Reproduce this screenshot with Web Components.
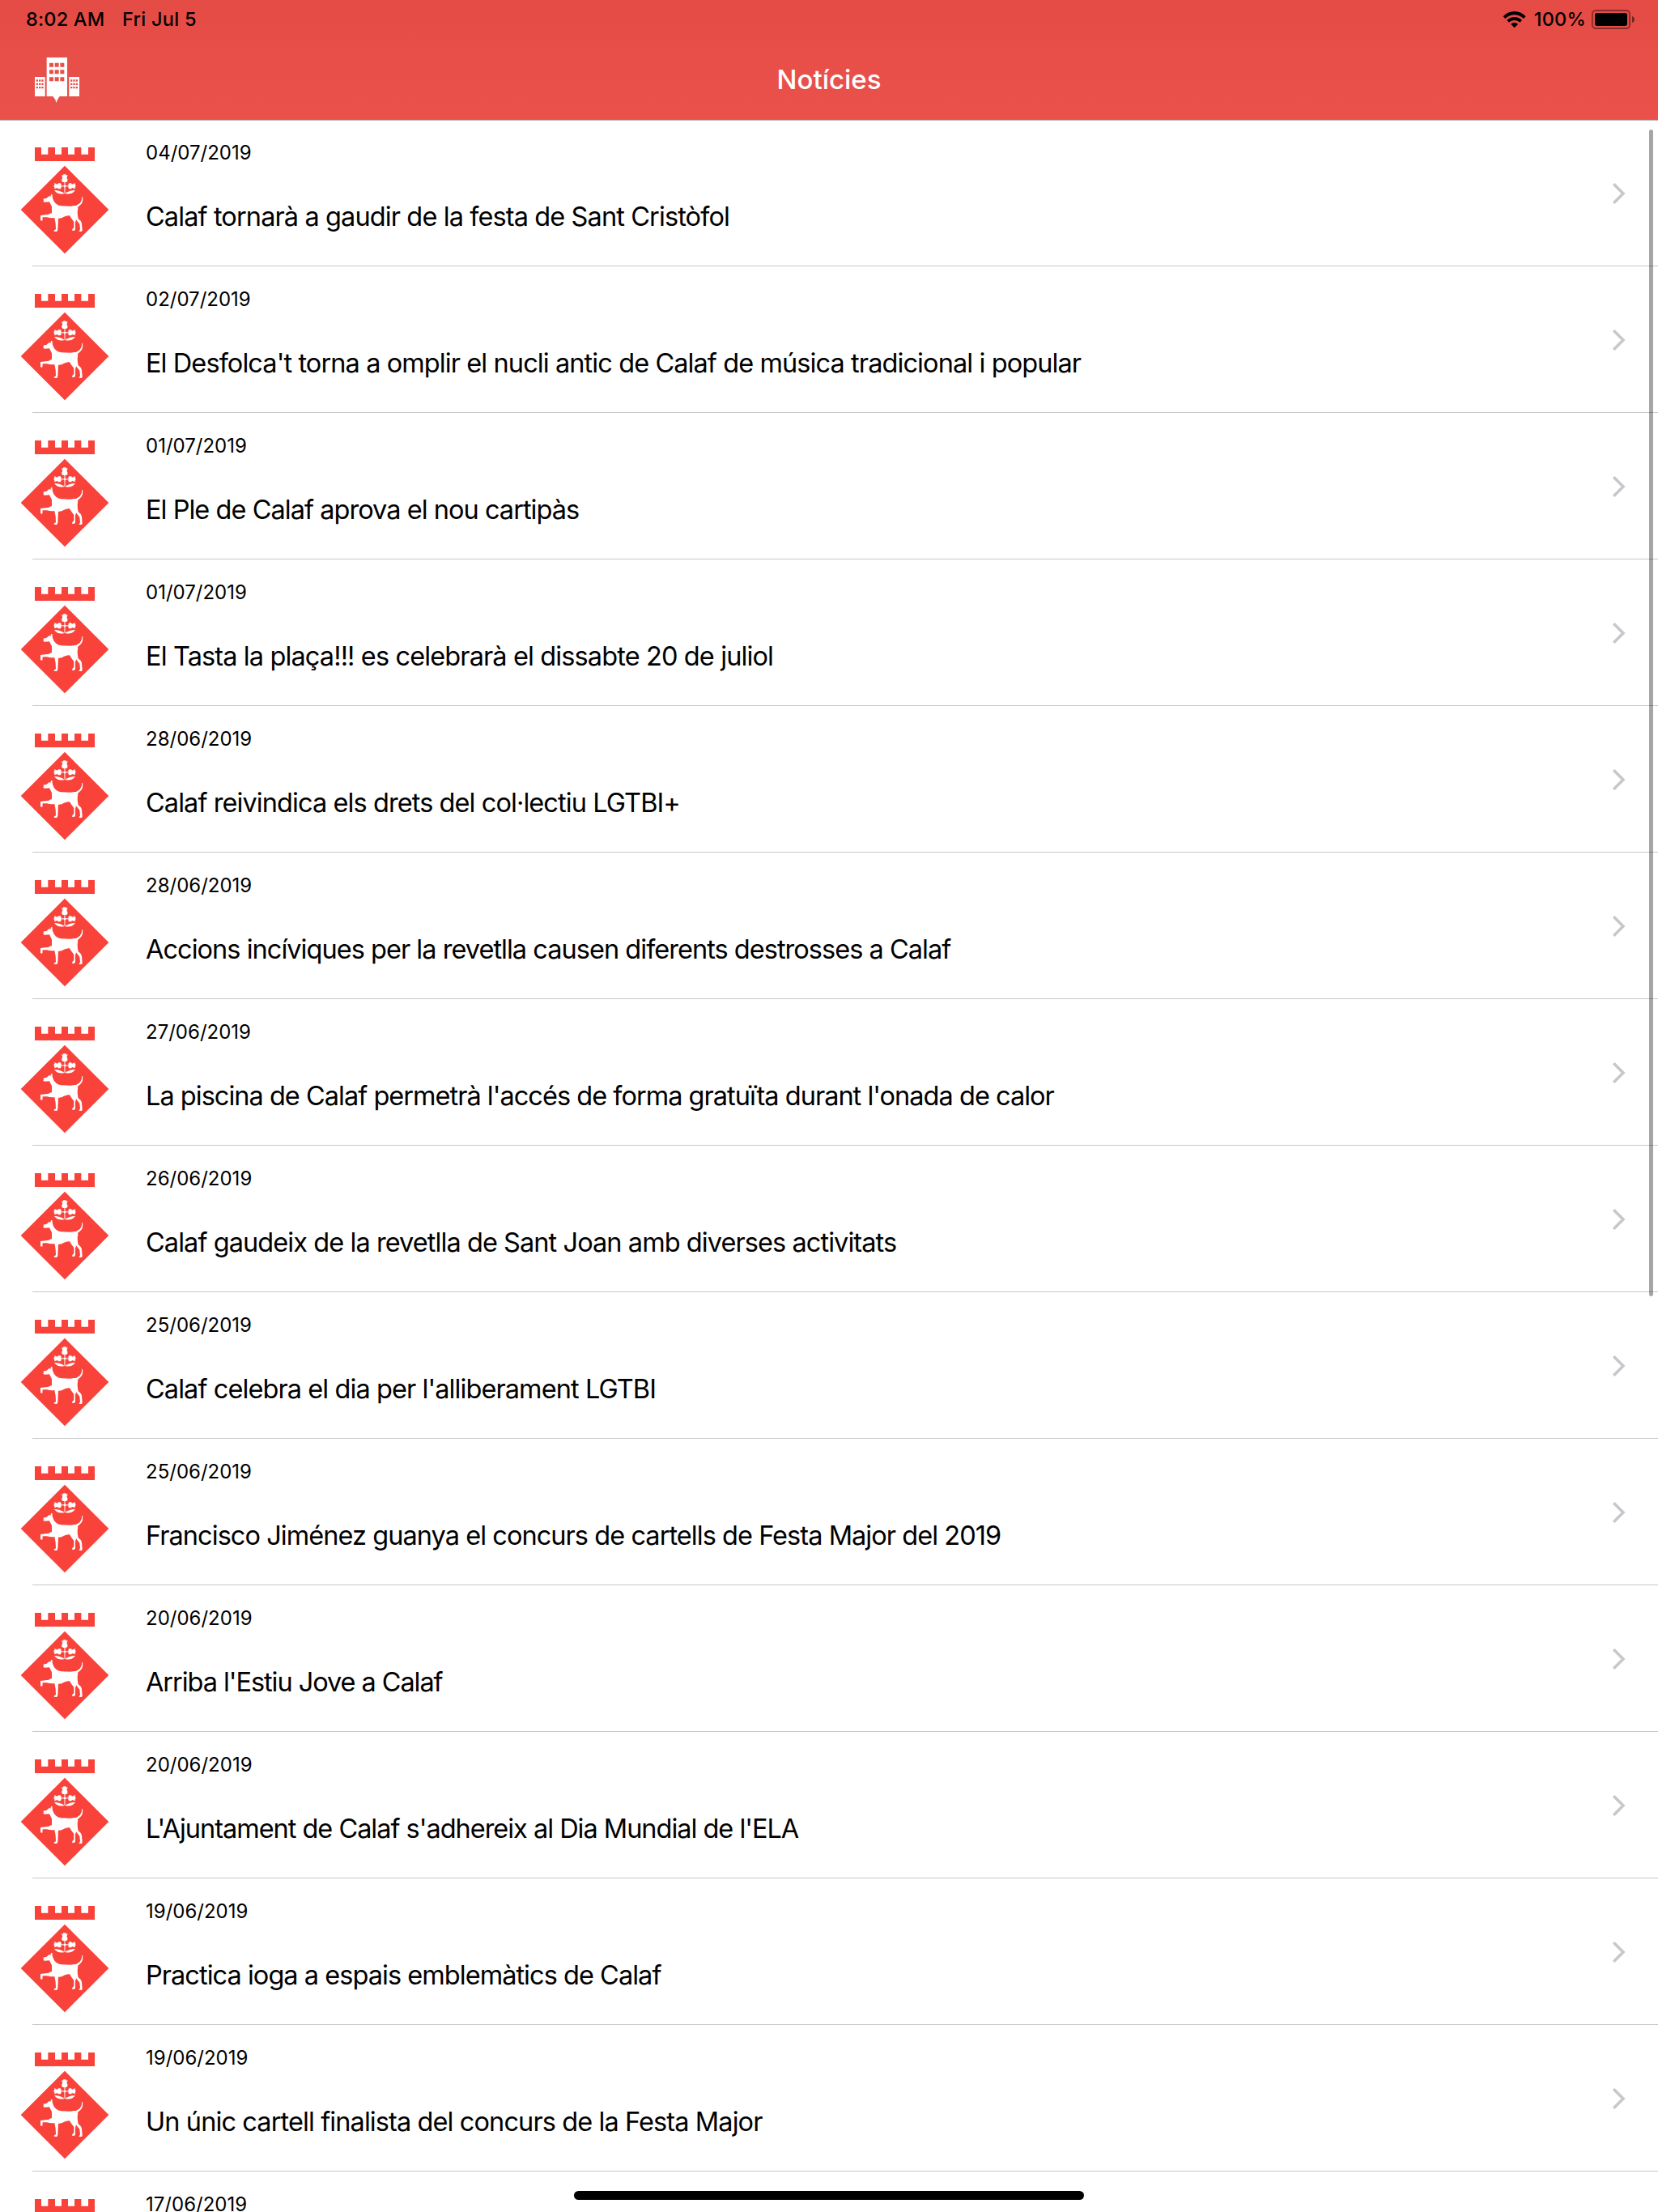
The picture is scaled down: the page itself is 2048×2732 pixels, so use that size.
<!DOCTYPE html>
<html>
<head>
<meta charset="utf-8">
<title>Notícies</title>
<style>
  body{
    margin:0;
    background:#fff;
    color:#000;
    font-family:Inter, "Liberation Sans", sans-serif;
  }
</style>
</head>
<body>
<news-app></news-app>

<script>
const statusBarTemplate = document.createElement('template');

statusBarTemplate.innerHTML = `
 <style>
  :host{
    display:flex;
    align-items:center;
    height:47px;
    box-sizing:border-box;
    padding:0 29px 0 32px;
    font-size:23.5px;
    font-weight:450;
    color:#000;
  }
  .time{
    letter-spacing:0.2px;
    width:119px;
  }
  .date{
    letter-spacing:0.3px;
    flex:1;
  }
  .level{
    margin:0 7px 0 10px;
    letter-spacing:0.2px;
  }
  svg{
    display:block;
  }
 </style>

 <span class="time">8:02 AM</span>
 <span class="date">Fri Jul 5</span>
 <svg width="29" height="22" viewBox="109 39 87 66">
   <path d="M111 61C135 36 171 36 195 61L187 69C168 50 138 50 119 69Z"/>
   <path d="M125 75C141 59 165 59 181 75L173 83C161 72 145 72 133 83Z"/>
   <path d="M140 90C147 82 159 82 166 90L153 103Z"/>
 </svg>
 <span class="level">100%</span>
 <svg width="53" height="24" viewBox="435 36 159 72">
   <rect x="437.5" y="38.5" width="139" height="67" rx="14" fill="none" stroke="#000" stroke-opacity=".45" stroke-width="5"/>
   <rect x="447" y="48" width="120" height="48" rx="8"/>
   <path d="M585 60Q594 63 594 72Q594 81 585 84Z" fill-opacity=".5"/>
 </svg>
`;
class StatusBar extends HTMLElement{
 constructor(){
   super();
   this.attachShadow({mode: 'open'})
   this.shadowRoot.appendChild(statusBarTemplate.content.cloneNode(true))
 }
}

window.customElements.define('status-bar', StatusBar)


const navBarTemplate = document.createElement('template');

navBarTemplate.innerHTML = `
 <style>
  :host{
    display:grid;
    grid-template-columns:1fr auto 1fr;
    align-items:center;
    height:101px;
    box-sizing:border-box;
    padding:0 43px;
    color:#fff;
  }
  .title{
    font-size:33px;
    line-height:40px;
    font-weight:550;
  }
  svg{
    display:block;
    margin-top:3px;
  }
 </style>

 <svg width="55" height="56" viewBox="129 213 165 168" fill="#fff">
   <path fill-rule="evenodd" d="M173 213H249V357H221Q213 366 209 381Q205 366 196 357H173Z
     M183 233h15v15h-15z M203 233h15v15h-15z M223 233h15v15h-15z
     M183 259h15v15h-15z M203 259h15v15h-15z M223 259h15v15h-15z
     M183 286h15v15h-15z M203 286h15v15h-15z M223 286h15v15h-15z"/>
   <path fill-rule="evenodd" d="M129 285H167V357H129Z
     M134 295h7v7h-7z M144 295h7v7h-7z M154 295h7v7h-7z
     M134 308h7v7h-7z M144 308h7v7h-7z M154 308h7v7h-7z
     M134 321h7v7h-7z M144 321h7v7h-7z M154 321h7v7h-7z"/>
   <path fill-rule="evenodd" d="M256 285H294V357H256Z
     M261 295h7v7h-7z M271 295h7v7h-7z M281 295h7v7h-7z
     M261 308h7v7h-7z M271 308h7v7h-7z M281 308h7v7h-7z
     M261 321h7v7h-7z M271 321h7v7h-7z M281 321h7v7h-7z"/>
 </svg>
 <span class="title"><slot></slot></span>
`;
class NavBar extends HTMLElement{
 constructor(){
   super();
   this.attachShadow({mode: 'open'})
   this.shadowRoot.appendChild(navBarTemplate.content.cloneNode(true))
 }
}

window.customElements.define('nav-bar', NavBar)


const townShieldTemplate = document.createElement('template');

townShieldTemplate.innerHTML = `
 <style>
  :host{
    display:block;
    width:110px;
    height:135px;
  }
  svg{
    display:block;
  }
 </style>

 <svg width="110" height="135" viewBox="45 60 330 405">
   <path fill="#f9423a" d="M99 66h24v26h25v-26h26v26h24v-26h24v26h24v-26h25v26h26v-26h24v51H99Z"/>
   <path fill="#f9423a" d="M210 134L373 297L210 460L47 297Z"/>
   <g fill="#fff">
     <path d="M198 168l5 2 2-4h9l2 4 5-2-4 12 3 3v9l-5 3h-11l-5-3v-9l3-3Z"/>
     <path d="M171 198l2 5-3 2v8l3 2-2 5 12-4 3 4h8l3-5v-11l-3-5h-8l-3 4Z"/>
     <path d="M249 198l-2 5 3 2v8l-3 2 2 5-12-4-3 4h-8l-3-5v-11l3-5h8l3 4Z"/>
     <path d="M197 208h26v3h-26z"/>
     <circle cx="210" cy="210" r="4"/>
     <path d="M171 225Q193 225 209 237Q185 243 171 225Z"/>
     <path d="M249 225Q227 225 211 237Q235 243 249 225Z"/>
     <path d="M208 194h4v43h-4z" fill-opacity=".75"/>
     <path d="M130 257L143 254L152 246L157 248L159 241L163 239L165 254Q168 266 178 275Q186 282 197 283L231 284Q244 281 252 282L260 277Q275 268 273 249L276 250Q279 269 268 279L258 288Q260 295 257 303Q257 320 260 331Q272 339 273 349L275 373L273 378L262 377L267 370L265 350L252 334L249 345L249 370L245 375L237 374L238 369L244 363L244 342Q234 330 228 319Q219 317 207 323Q198 330 186 329L184 371L181 378L170 377L171 373L177 370Q177 345 172 327Q158 329 144 325L128 325L127 338L120 337L120 318L151 314Q158 309 162 310L162 286Q158 278 153 268L135 269L130 266L132 262Z"/>
   </g>
 </svg>
`;
class TownShield extends HTMLElement{
 constructor(){
   super();
   this.attachShadow({mode: 'open'})
   this.shadowRoot.appendChild(townShieldTemplate.content.cloneNode(true))
 }
}

window.customElements.define('town-shield', TownShield)


const newsItemTemplate = document.createElement('template');

newsItemTemplate.innerHTML = `
 <style>
  :host{
    display:block;
    height:181px;
  }
  .row{
    display:flex;
    height:180px;
    box-sizing:border-box;
    padding-left:25px;
    padding-right:40px;
  }
  town-shield{
    margin-top:32px;
  }
  .text{
    flex:1;
    margin-left:45px;
    padding-top:26px;
    white-space:nowrap;
  }
  .date{
    font-size:24px;
    line-height:30px;
  }
  .title{
    margin-top:44px;
    font-size:32.5px;
    line-height:40px;
    font-variant-ligatures:none;
    font-feature-settings:"locl" 0, "calt" 0;
  }
  .chevron{
    align-self:center;
    margin-top:2px;
  }
  .line{
    height:1px;
    margin-left:40px;
    background:#c8c7cc;
  }
 </style>

 <div class="row">
   <town-shield></town-shield>
   <div class="text">
     <div class="date"></div>
     <div class="title"><slot></slot></div>
   </div>
   <svg class="chevron" width="16" height="26" viewBox="0 0 16 26">
     <path d="M1.2 1.2L13 13L1.2 24.8" fill="none" stroke="#c7c7cc" stroke-width="3.6"/>
   </svg>
 </div>
 <div class="line"></div>
`;
class NewsItem extends HTMLElement{
 constructor(){
   super();
   this.attachShadow({mode: 'open'})
   this.shadowRoot.appendChild(newsItemTemplate.content.cloneNode(true))
 }

 connectedCallback(){
   this.shadowRoot.querySelector('.date').textContent = this.getAttribute('date')
   this.shadowRoot.querySelector('.title').style.letterSpacing = this.getAttribute('tracking') + 'px'
 }
}

window.customElements.define('news-item', NewsItem)


// date, title, letter spacing of the title
const news = [
  ['04/07/2019', "Calaf tornarà a gaudir de la festa de Sant Cristòfol", -0.89],
  ['02/07/2019', "El Desfolca't torna a omplir el nucli antic de Calaf de música tradicional i popular", -0.91],
  ['01/07/2019', "El Ple de Calaf aprova el nou cartipàs", -0.96],
  ['01/07/2019', "El Tasta la plaça!!! es celebrarà el dissabte 20 de juliol", -0.88],
  ['28/06/2019', "Calaf reivindica els drets del col·lectiu LGTBI+", -0.92],
  ['28/06/2019', "Accions incíviques per la revetlla causen diferents destrosses a Calaf", -0.97],
  ['27/06/2019', "La piscina de Calaf permetrà l'accés de forma gratuïta durant l'onada de calor", -0.98],
  ['26/06/2019', "Calaf gaudeix de la revetlla de Sant Joan amb diverses activitats", -0.93],
  ['25/06/2019', "Calaf celebra el dia per l'alliberament LGTBI", -0.92],
  ['25/06/2019', "Francisco Jiménez guanya el concurs de cartells de Festa Major del 2019", -0.95],
  ['20/06/2019', "Arriba l'Estiu Jove a Calaf", -1.06],
  ['20/06/2019', "L'Ajuntament de Calaf s'adhereix al Dia Mundial de l'ELA", -1.02],
  ['19/06/2019', "Practica ioga a espais emblemàtics de Calaf", -0.96],
  ['19/06/2019', "Un únic cartell finalista del concurs de la Festa Major", -0.9],
  ['17/06/2019', "", 0]
];

const newsAppTemplate = document.createElement('template');

newsAppTemplate.innerHTML = `
 <style>
  :host{
    display:block;
    position:relative;
    height:2732px;
    overflow:hidden;
  }
  header{
    height:148px;
    box-shadow:0 1px 0 #b2b2b2;
    background:linear-gradient(#e54b45, #e94f49 50%, #eb514b);
  }
  .scroll{
    position:absolute;
    top:160px;
    right:6px;
    width:5px;
    height:1441px;
    border-radius:3px;
    background:rgba(0,0,0,.35);
  }
  .home{
    position:absolute;
    left:709px;
    bottom:15px;
    width:630px;
    height:11px;
    border-radius:6px;
    background:#000;
  }
 </style>

 <header>
   <status-bar></status-bar>
   <nav-bar>Notícies</nav-bar>
 </header>
 <main></main>
 <div class="scroll"></div>
 <div class="home"></div>
`;
class NewsApp extends HTMLElement{
 constructor(){
   super();
   this.attachShadow({mode: 'open'})
   this.shadowRoot.appendChild(newsAppTemplate.content.cloneNode(true))
 }

 connectedCallback(){
   const list = this.shadowRoot.querySelector('main')
   news.forEach(([date, title, tracking]) => {
     const item = document.createElement('news-item')
     item.setAttribute('date', date)
     item.setAttribute('tracking', tracking)
     item.textContent = title
     list.appendChild(item)
   })
 }
}

window.customElements.define('news-app', NewsApp)
</script>
</body>
</html>
